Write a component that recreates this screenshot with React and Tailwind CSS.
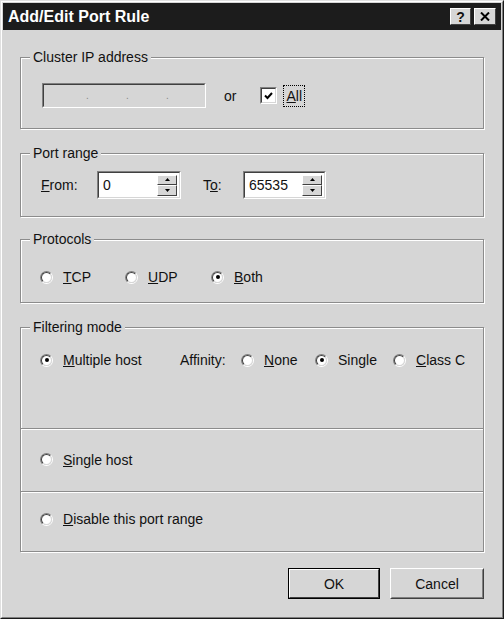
import React from "react";

function Radio({ checked }) {
  return (
    <div className="w-[13px] h-[13px] shrink-0 rounded-full border border-t-[#808080] border-l-[#808080] border-r-white border-b-white">
      <div className="w-full h-full rounded-full bg-white border border-t-[#404040] border-l-[#404040] border-r-[#d6d6d6] border-b-[#d6d6d6] flex items-center justify-center">
        {checked && <div className="w-[4px] h-[4px] rounded-full bg-black" />}
      </div>
    </div>
  );
}

function RadioItem({ checked, children, className = "" }) {
  return (
    <div className={"flex items-center gap-[10px] " + className}>
      <Radio checked={checked} />
      <span className="leading-[16px]">{children}</span>
    </div>
  );
}

function Group({ label, className = "", children }) {
  return (
    <div className={"relative border border-[#8c8c8c] shadow-[inset_1px_1px_0_#ffffff,1px_1px_0_#ffffff] " + className}>
      <span className="absolute left-[9px] -top-[9px] px-[3px] bg-[#d6d6d6] leading-[16px]">{label}</span>
      {children}
    </div>
  );
}

function Sunken({ className = "", children }) {
  return (
    <div className={"border border-t-[#808080] border-l-[#808080] border-r-white border-b-white " + className}>
      <div className="w-full h-full border border-t-[#404040] border-l-[#404040] border-r-[#d6d6d6] border-b-[#d6d6d6] flex items-center">
        {children}
      </div>
    </div>
  );
}

function SpinBtn({ up }) {
  return (
    <div className="flex-1 bg-[#d6d6d6] border border-t-white border-l-white border-r-[#404040] border-b-[#404040] flex items-center justify-center">
      <svg width="5" height="3" viewBox="0 0 5 3">
        {up ? <path d="M2.5 0 L5 3 L0 3 Z" fill="#000" /> : <path d="M0 0 L5 0 L2.5 3 Z" fill="#000" />}
      </svg>
    </div>
  );
}

function Spinner({ value, width }) {
  return (
    <Sunken className={"h-[28px] bg-white " + width}>
      <span className="flex-1 pl-[4px] leading-[16px]">{value}</span>
      <div className="w-[20px] h-[21px] mr-[2px] flex flex-col">
        <SpinBtn up />
        <SpinBtn />
      </div>
    </Sunken>
  );
}

export default function App() {
  return (
    <div className="w-[504px] h-[619px] bg-[#d6d6d6] text-[14px] text-[#111] font-['Liberation_Sans',Arial,sans-serif] border border-t-[#e0e0e0] border-l-[#e0e0e0] border-r-[#1a1a1a] border-b-[#1a1a1a]">
      <div className="w-full h-full border border-t-white border-l-white border-r-[#808080] border-b-[#808080] p-[1px] flex flex-col">
        {/* Title bar */}
        <div className="h-[27px] bg-[#1c1c1c] flex items-center pl-[5px] pr-[5px]">
          <span className="text-white font-bold text-[16px] leading-[18px] flex-1">Add/Edit Port Rule</span>
          <div className="flex gap-[3px]">
            <div className="w-[21px] h-[17px] bg-[#d6d6d6] border border-t-white border-l-white border-r-[#404040] border-b-[#404040] flex items-center justify-center font-bold text-[14px] leading-none">?</div>
            <div className="w-[22px] h-[17px] bg-[#d6d6d6] border border-t-white border-l-white border-r-[#404040] border-b-[#404040] flex items-center justify-center">
              <svg width="10" height="9" viewBox="0 0 10 9">
                <path d="M1 0.5 L9 8.5 M9 0.5 L1 8.5" stroke="#000" strokeWidth="2" />
              </svg>
            </div>
          </div>
        </div>

        {/* Content */}
        <div className="pl-[17px] flex flex-col">
          <Group label="Cluster IP address" className="mt-[27px] w-[464px] h-[72px]">
            <div className="flex items-center pl-[21px] pt-[25px]">
              <Sunken className="w-[164px] h-[25px]">
                <div className="flex w-full pl-[42px] text-[#888] text-[10px]">
                  <span className="w-[40px]">.</span>
                  <span className="w-[40px]">.</span>
                  <span>.</span>
                </div>
              </Sunken>
              <span className="ml-[18px] leading-[16px]">or</span>
              <div className="ml-[24px] w-[17px] h-[17px] border border-t-[#808080] border-l-[#808080] border-r-white border-b-white">
                <div className="w-full h-full bg-white border border-t-[#404040] border-l-[#404040] border-r-[#d6d6d6] border-b-[#d6d6d6] flex items-center justify-center">
                  <svg width="9" height="8" viewBox="0 0 9 8">
                    <path d="M1 3.5 L3.5 6 L8 1" stroke="#000" strokeWidth="2" fill="none" />
                  </svg>
                </div>
              </div>
              <span className="ml-[6px] px-[2px] py-[2px] border border-dotted border-black leading-[16px]"><u>A</u>ll</span>
            </div>
          </Group>

          <Group label="Port range" className="mt-[24px] w-[464px] h-[64px]">
            <div className="flex items-center pl-[20px] pt-[17px]">
              <span className="w-[56px] leading-[16px]"><u>F</u>rom:</span>
              <Spinner value="0" width="w-[84px]" />
              <span className="ml-[22px] w-[40px] leading-[16px]">T<u>o</u>:</span>
              <Spinner value="65535" width="w-[83px]" />
            </div>
          </Group>

          <Group label="Protocols" className="mt-[22px] w-[464px] h-[64px]">
            <div className="flex items-center pl-[19px] pt-[29px]">
              <RadioItem className="w-[85px]"><u>T</u>CP</RadioItem>
              <RadioItem className="w-[86px]"><u>U</u>DP</RadioItem>
              <RadioItem checked><u>B</u>oth</RadioItem>
            </div>
          </Group>

          <Group label="Filtering mode" className="mt-[24px] w-[464px] h-[225px] flex flex-col">
            <div className="h-[100px] flex items-start pl-[19px] pt-[24px]">
              <RadioItem checked className="w-[140px]"><u>M</u>ultiple host</RadioItem>
              <span className="w-[61px] leading-[16px]">Affinity:</span>
              <RadioItem className="w-[74px]"><u>N</u>one</RadioItem>
              <RadioItem checked className="w-[78px]">Single</RadioItem>
              <RadioItem><u>C</u>lass C</RadioItem>
            </div>
            <div className="h-[2px] border-t border-t-[#8c8c8c] border-b border-b-white" />
            <div className="h-[61px] flex items-center pl-[19px] pb-[2px]">
              <RadioItem><u>S</u>ingle host</RadioItem>
            </div>
            <div className="h-[2px] border-t border-t-[#8c8c8c] border-b border-b-white" />
            <div className="flex-1 flex items-center pl-[19px] pb-[6px]">
              <RadioItem><u>D</u>isable this port range</RadioItem>
            </div>
          </Group>

          <div className="w-[464px] mt-[16px] flex justify-end gap-[10px]">
            <div className="w-[92px] h-[31px] border border-black">
              <div className="w-full h-full bg-[#d6d6d6] border border-t-white border-l-white border-r-[#404040] border-b-[#404040] flex items-center justify-center">
                <span className="leading-[16px]">OK</span>
              </div>
            </div>
            <div className="w-[94px] h-[31px] bg-[#d6d6d6] border border-t-white border-l-white border-r-[#404040] border-b-[#404040]">
              <div className="w-full h-full border border-t-[#d6d6d6] border-l-[#d6d6d6] border-r-[#808080] border-b-[#808080] flex items-center justify-center">
                <span className="leading-[16px]">Cancel</span>
              </div>
            </div>
          </div>
        </div>
      </div>
    </div>
  );
}
